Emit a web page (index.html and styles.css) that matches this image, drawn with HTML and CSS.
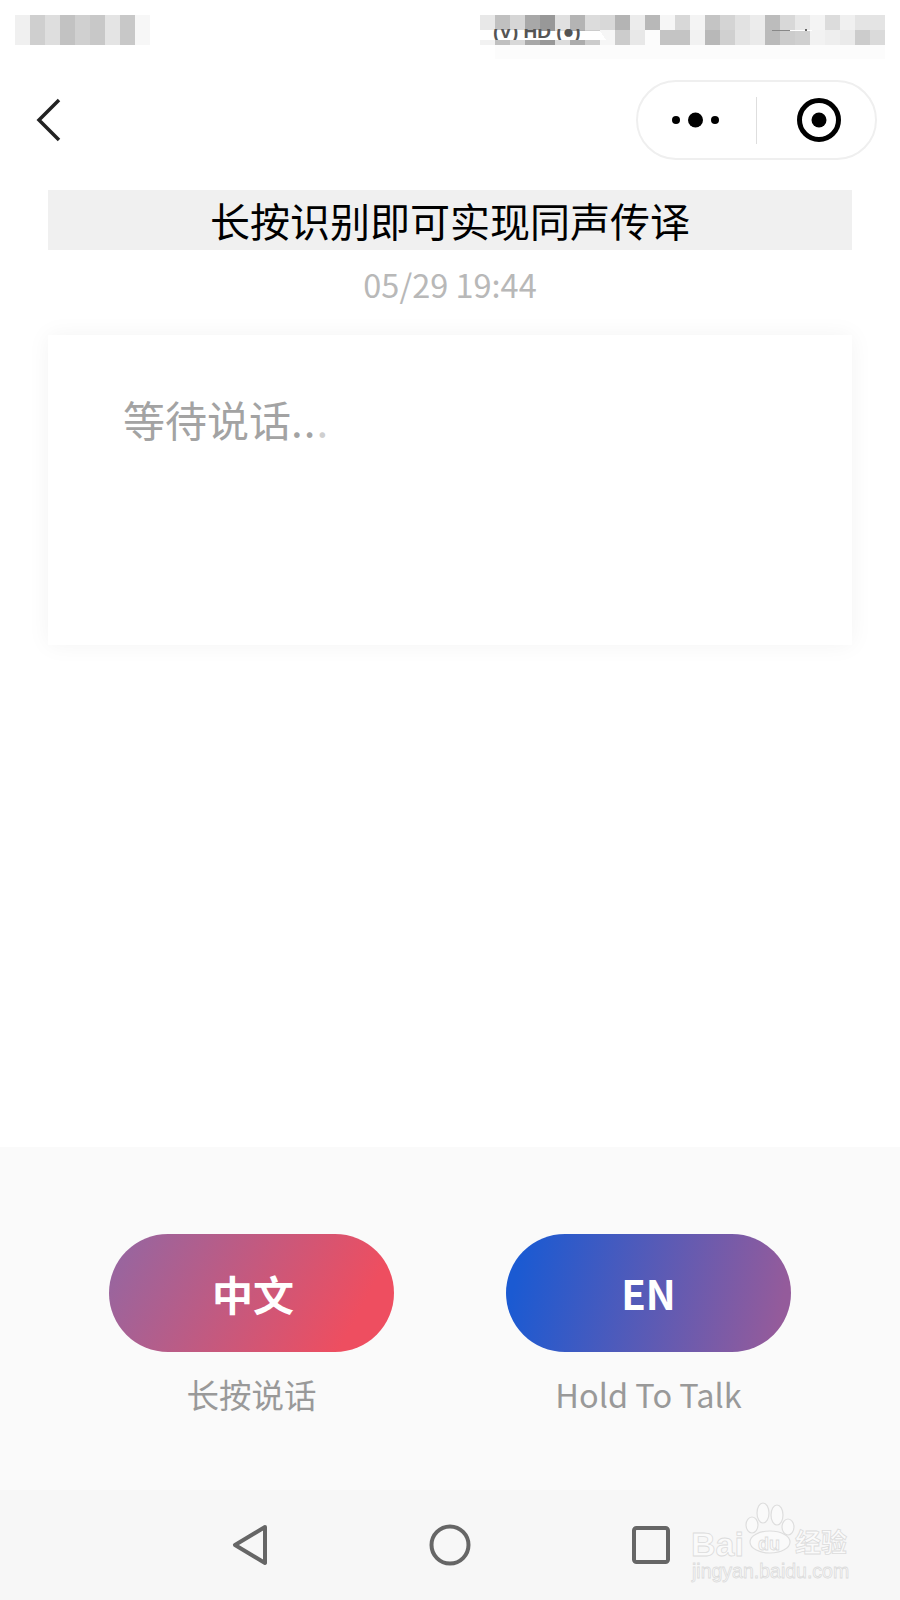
FILE: index.html
```html
<!DOCTYPE html>
<html lang="zh">
<head>
<meta charset="utf-8">
<title>同声传译</title>
<link rel="stylesheet" href="styles.css">
</head>
<body>
<div class="page">
  <div class="status">
    <svg class="mosaic" width="900" height="62" viewBox="0 0 900 62" shape-rendering="crispEdges">
      <defs>
        <filter id="soft"><feGaussianBlur stdDeviation="0.7"/></filter>
        <clipPath id="strip"><rect x="480" y="29" width="130" height="11"/></clipPath>
      </defs>
      <g filter="url(#soft)">
      <rect x="15" y="15" width="15" height="30" fill="#f0f0f0"/>
      <rect x="30" y="15" width="15" height="30" fill="#cfcfcf"/>
      <rect x="45" y="15" width="15" height="30" fill="#dedede"/>
      <rect x="60" y="15" width="15" height="30" fill="#c2c2c2"/>
      <rect x="75" y="15" width="15" height="30" fill="#d0d0d0"/>
      <rect x="90" y="15" width="15" height="30" fill="#c8c8c8"/>
      <rect x="105" y="15" width="15" height="30" fill="#e4e4e4"/>
      <rect x="120" y="15" width="15" height="30" fill="#c8c8c8"/>
      <rect x="135" y="15" width="15" height="30" fill="#f7f7f7"/>

      <rect x="480" y="15" width="15" height="15" fill="#e8e8e8"/>
      <rect x="495" y="15" width="15" height="15" fill="#c0c0c0"/>
      <rect x="510" y="15" width="15" height="15" fill="#d6d6d6"/>
      <rect x="525" y="15" width="15" height="15" fill="#a8a8a8"/>
      <rect x="540" y="15" width="15" height="15" fill="#989898"/>
      <rect x="555" y="15" width="15" height="15" fill="#e0e0e0"/>
      <rect x="570" y="15" width="15" height="15" fill="#b4b4b4"/>
      <rect x="585" y="15" width="15" height="15" fill="#dcdcdc"/>
      <rect x="600" y="15" width="15" height="15" fill="#d8d8d8"/>
      <rect x="615" y="15" width="15" height="15" fill="#b4b4b4"/>
      <rect x="630" y="15" width="15" height="15" fill="#ececec"/>
      <rect x="645" y="15" width="15" height="15" fill="#b8b8b8"/>
      <rect x="660" y="15" width="15" height="15" fill="#f6f6f6"/>
      <rect x="675" y="15" width="15" height="15" fill="#d8d8d8"/>
      <rect x="690" y="15" width="15" height="15" fill="#f4f4f4"/>
      <rect x="705" y="15" width="15" height="15" fill="#c4c4c4"/>
      <rect x="720" y="15" width="15" height="15" fill="#d4d4d4"/>
      <rect x="735" y="15" width="15" height="15" fill="#e2e2e2"/>
      <rect x="750" y="15" width="15" height="15" fill="#ececec"/>
      <rect x="765" y="15" width="15" height="15" fill="#bcbcbc"/>
      <rect x="780" y="15" width="15" height="15" fill="#d8d8d8"/>
      <rect x="795" y="15" width="15" height="15" fill="#e8e8e8"/>
      <rect x="810" y="15" width="15" height="15" fill="#f4f4f4"/>
      <rect x="825" y="15" width="15" height="15" fill="#dcdcdc"/>
      <rect x="840" y="15" width="15" height="15" fill="#f0f0f0"/>
      <rect x="855" y="15" width="30" height="15" fill="#e4e4e4"/>

      <rect x="480" y="30" width="15" height="15" fill="#f2f2f2"/>
      <rect x="495" y="30" width="15" height="15" fill="#c0c0c0"/>
      <rect x="510" y="30" width="15" height="15" fill="#d8d8d8"/>
      <rect x="525" y="30" width="15" height="15" fill="#a8a8a8"/>
      <rect x="540" y="30" width="15" height="15" fill="#989898"/>
      <rect x="555" y="30" width="15" height="15" fill="#dcdcdc"/>
      <rect x="570" y="30" width="15" height="15" fill="#acacac"/>
      <rect x="585" y="30" width="15" height="15" fill="#cccccc"/>
      <rect x="600" y="30" width="15" height="15" fill="#f6f6f6"/>
      <rect x="615" y="30" width="15" height="15" fill="#cccccc"/>
      <rect x="630" y="30" width="15" height="15" fill="#e8e8e8"/>
      <rect x="645" y="30" width="15" height="15" fill="#fcfcfc"/>
      <rect x="660" y="30" width="30" height="15" fill="#c4c4c4"/>
      <rect x="690" y="30" width="15" height="15" fill="#f2f2f2"/>
      <rect x="705" y="30" width="15" height="15" fill="#b8b8b8"/>
      <rect x="720" y="30" width="15" height="15" fill="#d0d0d0"/>
      <rect x="735" y="30" width="15" height="15" fill="#e4e4e4"/>
      <rect x="750" y="30" width="15" height="15" fill="#eaeaea"/>
      <rect x="765" y="30" width="15" height="15" fill="#bababa"/>
      <rect x="780" y="30" width="15" height="15" fill="#cccccc"/>
      <rect x="795" y="30" width="15" height="15" fill="#d0d0d0"/>
      <rect x="810" y="30" width="15" height="15" fill="#f2f2f2"/>
      <rect x="825" y="30" width="15" height="15" fill="#eeeeee"/>
      <rect x="840" y="30" width="15" height="15" fill="#eaeaea"/>
      <rect x="855" y="30" width="15" height="15" fill="#cccccc"/>
      <rect x="870" y="30" width="15" height="15" fill="#dadada"/>

      <rect x="495" y="45" width="390" height="14" fill="#fcfcfc"/>
      </g>
      <polygon points="480,30 600,31 606,40 480,40" fill="#ffffff"/>
      <text class="status-text" x="493" y="38" clip-path="url(#strip)">(V) HD (●)</text>
      <rect x="772" y="29.5" width="40" height="1.5" fill="#ffffff"/>
      <rect x="772" y="29.5" width="18" height="1" fill="#888888"/>
      <rect x="805" y="29" width="2" height="2" fill="#666666"/>
    </svg>
  </div>

  <header class="topbar">
    <svg class="back" width="30" height="48" viewBox="0 0 30 48">
      <path d="M23 4 L3 24 L23 44" transform="translate(2 0)" fill="none" stroke="#222" stroke-width="3.5"/>
    </svg>
    <div class="capsule">
      <svg class="more" width="50" height="20" viewBox="0 0 50 20">
        <circle cx="6" cy="10" r="4" fill="#000"/>
        <circle cx="25.5" cy="10" r="7.5" fill="#000"/>
        <circle cx="45" cy="10" r="4" fill="#000"/>
      </svg>
      <span class="divider"></span>
      <svg class="target" width="44" height="44" viewBox="0 0 44 44">
        <circle cx="22" cy="22" r="19.5" fill="none" stroke="#000" stroke-width="5"/>
        <circle cx="22" cy="22" r="7.5" fill="#000"/>
      </svg>
    </div>
  </header>

  <main class="content">
    <h1 class="title">长按识别即可实现同声传译</h1>
    <div class="date">05/29 19:44</div>
    <section class="card">
      <p class="waiting">等待说话<span class="dots">..</span><span class="dots fade">.</span></p>
    </section>
  </main>

  <section class="panel">
    <div class="talk">
      <button class="pill pill-zh">中文</button>
      <div class="hint">长按说话</div>
    </div>
    <div class="talk">
      <button class="pill pill-en">EN</button>
      <div class="hint">Hold To Talk</div>
    </div>
  </section>

  <nav class="keys">
    <svg class="key-back" width="42" height="46" viewBox="0 0 42 46">
      <path d="M35 5 L5 23 L35 41 Z" fill="none" stroke="#666" stroke-width="4" stroke-linejoin="round"/>
    </svg>
    <svg class="key-home" width="42" height="42" viewBox="0 0 42 42">
      <circle cx="21" cy="21" r="18.5" fill="none" stroke="#666" stroke-width="4"/>
    </svg>
    <svg class="key-recent" width="38" height="38" viewBox="0 0 38 38">
      <rect x="2" y="2" width="34" height="34" rx="2.5" fill="none" stroke="#666" stroke-width="4"/>
    </svg>
    <div class="watermark">
      <svg class="paw" width="50" height="52" viewBox="0 0 50 52">
        <g fill="#fafafa" stroke="#dedede" stroke-width="1.2">
          <ellipse cx="7" cy="23" rx="6" ry="8"/>
          <ellipse cx="18" cy="11" rx="6" ry="10"/>
          <ellipse cx="32" cy="13" rx="6" ry="10"/>
          <ellipse cx="43" cy="25" rx="6" ry="8"/>
          <ellipse cx="25" cy="40" rx="20" ry="11"/>
        </g>
      </svg>
      <span class="wm-bai">Bai</span>
      <span class="wm-du">du</span>
      <span class="wm-cn">经验</span>
      <span class="wm-url">jingyan.baidu.com</span>
    </div>
  </nav>
</div>
</body>
</html>
```
FILE: styles.css
```css
* { box-sizing: border-box; }
html, body { margin: 0; padding: 0; background: #fff; }
body { font-family: "Noto Sans CJK SC", "Noto Sans", sans-serif; }
.page { width: 900px; height: 1600px; display: flex; flex-direction: column; overflow: hidden; }

.status { height: 62px; flex: none; }
.mosaic { display: block; }
.status-text { font: 700 19px "Liberation Sans", sans-serif; fill: #555; }

.topbar { height: 118px; flex: none; display: flex; align-items: flex-start; justify-content: space-between; padding: 18px 23px 0 34px; }
.back { display: block; margin-top: 16px; }
.capsule { width: 241px; height: 80px; border: 2px solid #efefef; border-radius: 40px; display: flex; align-items: center; padding-left: 32px; background: #fff; }
.more { display: block; flex: none; }
.divider { width: 1px; height: 47px; background: #dedede; margin-left: 36px; flex: none; }
.target { display: block; flex: none; margin-left: 40px; }

.content { flex: 1; padding: 10px 48px 0; }
.title { margin: 0; height: 60px; background: #f0f0f0; color: #000; font-size: 40px; font-weight: 400; line-height: 60px; text-align: center; }
.date { margin-top: 13px; height: 42px; line-height: 42px; text-align: center; font-size: 32.5px; color: #b8b8b8; }
.card { margin-top: 30px; height: 310px; background: #fff; box-shadow: 0 0 22px rgba(0, 0, 0, 0.05); padding: 51px 75px; }
.waiting { margin: 0; font-size: 42px; line-height: 66px; color: #a3a3a3; }
.dots { letter-spacing: 1px; }
.fade { color: #cfcfcf; }

.panel { height: 343px; flex: none; background: #fafafa; display: flex; justify-content: space-between; padding: 87px 109px 0; }
.talk { width: 285px; display: flex; flex-direction: column; align-items: center; }
.pill { width: 285px; height: 118px; border: 0; border-radius: 59px; color: #fff; font-family: inherit; font-size: 40px; font-weight: 700; padding: 0; }
.pill-zh { background: linear-gradient(118deg, #98659f 6%, #ee4e60 84%); font-size: 41px; padding-left: 3px; }
.pill-en { background: linear-gradient(102deg, #1b5ad2 6%, #945b9b 94%); }
.hint { margin-top: 12px; font-size: 32.5px; line-height: 60px; color: #999; }

.keys { position: relative; height: 110px; flex: none; background: #f7f7f7; display: flex; align-items: center; padding-left: 230px; }
.key-back { display: block; flex: none; }
.key-home { display: block; flex: none; margin-left: 157px; }
.key-recent { display: block; flex: none; margin-left: 161px; }
.watermark { position: absolute; left: 0; top: 0; width: 900px; height: 110px; pointer-events: none; }
.paw { position: absolute; left: 745px; top: 12px; }
.wm-bai, .wm-du, .wm-cn, .wm-url { position: absolute; color: #fafafa; -webkit-text-stroke: 0.8px #dcdcdc; white-space: nowrap; font-family: "Liberation Sans", sans-serif; }
.wm-bai { left: 691px; top: 34px; font-size: 34px; font-weight: 700; line-height: 40px; }
.wm-du { left: 758px; top: 44px; font-size: 18px; font-weight: 700; line-height: 20px; }
.wm-cn { left: 795px; top: 34px; font-size: 26px; line-height: 34px; font-family: "Noto Sans CJK SC", sans-serif; font-weight: 700; }
.wm-url { left: 692px; top: 69px; font-size: 19.5px; line-height: 24px; }
```
